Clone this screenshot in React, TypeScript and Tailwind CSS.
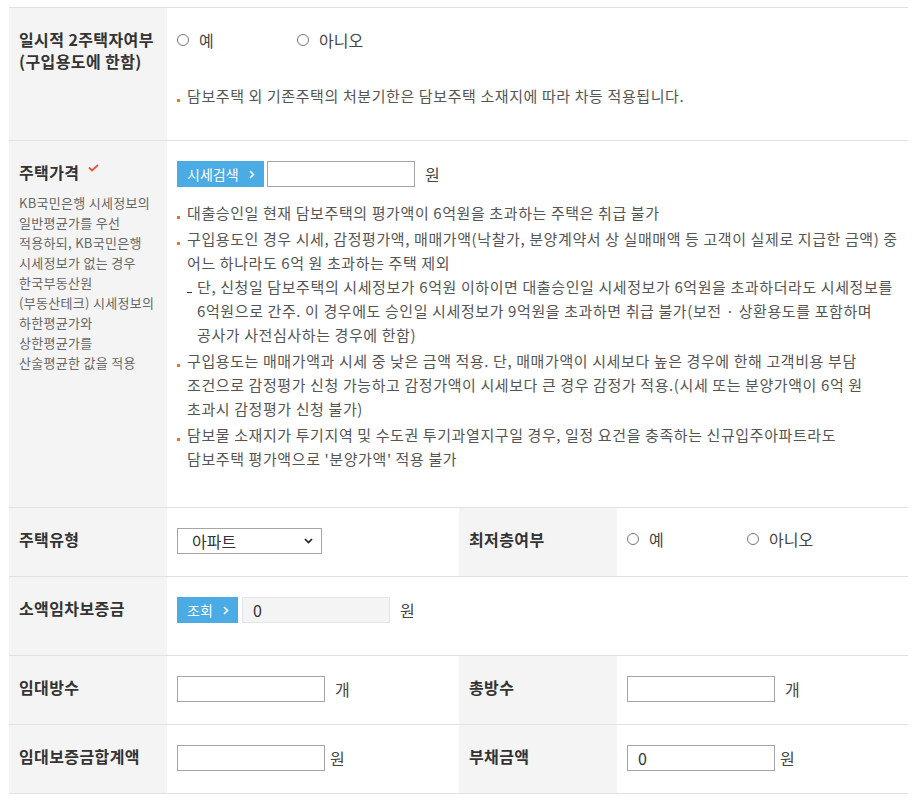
import React from 'react';

const Radio = ({ label }: { label: string }) => (
  <span className="flex items-center w-[120px]">
    <span className="w-[12px] h-[12px] rounded-full border border-[#777] bg-white" />
    <span className="ml-[10px] text-[16px] text-[#444]">{label}</span>
  </span>
);

const Bullet = ({ lines, first }: { lines: string[]; first?: boolean }) => (
  <li className={`relative pl-[10px] ${first ? '' : 'mt-[2px]'}`}>
    <span className="absolute left-0 top-[15px] w-[3px] h-[3px] bg-[#f26f21]" />
    {lines.map((l) => (
      <span key={l} className="block whitespace-nowrap">
        {l}
      </span>
    ))}
  </li>
);

const Dash = ({ lines }: { lines: string[] }) => (
  <li className="relative pl-[20px]">
    <span className="absolute left-[10px] top-[17px] w-[5px] h-px bg-[#333]" />
    {lines.map((l) => (
      <span key={l} className="block whitespace-nowrap">
        {l}
      </span>
    ))}
  </li>
);

const Label = ({ children, className = '' }: { children: React.ReactNode; className?: string }) => (
  <div className={`w-[158px] shrink-0 bg-[#f4f4f4] pl-[10px] pt-[20px] ${className}`}>
    <div className="text-[16px] leading-[22px] tracking-[0.4px] font-bold text-[#333] whitespace-nowrap">{children}</div>
  </div>
);

const BlueButton = ({ text, width }: { text: string; width: string }) => (
  <button className={`h-[26px] ${width} bg-[#4aabe5] text-white text-[14px] flex items-center pl-[10px] gap-[10px]`}>
    <span>{text}</span>
    <svg width="6" height="9" viewBox="0 0 6 9">
      <path d="M1 1l3.5 3.5L1 8" stroke="white" strokeWidth="1.6" fill="none" />
    </svg>
  </button>
);

const TextBox = ({ value = '', className = '' }: { value?: string; className?: string }) => (
  <input
    readOnly
    value={value}
    className={`h-[26px] w-[148px] border border-[#a5a5a5] bg-white px-[10px] text-[16px] text-[#333] outline-none ${className}`}
  />
);

const App = () => {
  return (
    <div className="bg-white min-h-[800px] pt-[7px] pl-[9px] font-['Noto_Sans_CJK_KR','Noto_Sans',sans-serif] text-[#555]">
      <div className="w-[899px] border-t border-[#e1e1e1]">
        {/* 일시적 2주택 */}
        <div className="flex border-b border-[#e1e1e1]">
          <Label>
            일시적 2주택자여부
            <br />
            (구입용도에 한함)
          </Label>
          <div className="flex-1 pl-[10px] pt-[19px] pb-[32px]">
            <div className="flex items-center h-[26px]">
              <Radio label="예" />
              <Radio label="아니오" />
            </div>
            <ul className="mt-[31px] text-[15px] tracking-[0.6px] leading-[24px]">
              <Bullet first lines={['담보주택 외 기존주택의 처분기한은 담보주택 소재지에 따라 차등 적용됩니다.']} />
            </ul>
          </div>
        </div>

        {/* 주택가격 */}
        <div className="flex border-b border-[#e1e1e1]">
          <div className="w-[158px] shrink-0 bg-[#f4f4f4] pl-[10px] pt-[20px]">
            <div className="flex items-center text-[16px] leading-[22px] tracking-[0.4px] font-bold text-[#333]">
              주택가격
              <svg className="ml-[9px] -mt-[9px]" width="11" height="8" viewBox="0 0 11 8">
                <path d="M1 3.5l3 3L10 1" stroke="#e8553f" strokeWidth="1.8" fill="none" />
              </svg>
            </div>
            <div className="mt-[10px] text-[13px] tracking-[0.3px] leading-[20px] text-[#666] whitespace-nowrap">
              <span className="block">KB국민은행 시세정보의</span>
              <span className="block">일반평균가를 우선</span>
              <span className="block">적용하되, KB국민은행</span>
              <span className="block">시세정보가 없는 경우</span>
              <span className="block">한국부동산원</span>
              <span className="block">(부동산테크) 시세정보의</span>
              <span className="block">하한평균가와</span>
              <span className="block">상한평균가를</span>
              <span className="block">산술평균한 값을 적용</span>
            </div>
          </div>
          <div className="flex-1 pl-[10px] pt-[20px] pb-[36px]">
            <div className="flex items-center">
              <BlueButton text="시세검색" width="w-[87px]" />
              <TextBox className="ml-[3px]" />
              <span className="ml-[10px] text-[16px] text-[#444]">원</span>
            </div>
            <ul className="mt-[14px] text-[15px] tracking-[0.6px] leading-[24px]">
              <Bullet first lines={['대출승인일 현재 담보주택의 평가액이 6억원을 초과하는 주택은 취급 불가']} />
              <Bullet
                lines={[
                  '구입용도인 경우 시세, 감정평가액, 매매가액(낙찰가, 분양계약서 상 실매매액 등 고객이 실제로 지급한 금액) 중',
                  '어느 하나라도 6억 원 초과하는 주택 제외',
                ]}
              />
              <Dash
                lines={[
                  '단, 신청일 담보주택의 시세정보가 6억원 이하이면 대출승인일 시세정보가 6억원을 초과하더라도 시세정보를',
                  '6억원으로 간주. 이 경우에도 승인일 시세정보가 9억원을 초과하면 취급 불가(보전 · 상환용도를 포함하며',
                  '공사가 사전심사하는 경우에 한함)',
                ]}
              />
              <Bullet
                lines={[
                  '구입용도는 매매가액과 시세 중 낮은 금액 적용. 단, 매매가액이 시세보다 높은 경우에 한해 고객비용 부담',
                  '조건으로 감정평가 신청 가능하고 감정가액이 시세보다 큰 경우 감정가 적용.(시세 또는 분양가액이 6억 원',
                  '초과시 감정평가 신청 불가)',
                ]}
              />
              <Bullet
                lines={[
                  '담보물 소재지가 투기지역 및 수도권 투기과열지구일 경우, 일정 요건을 충족하는 신규입주아파트라도',
                  "담보주택 평가액으로 '분양가액' 적용 불가",
                ]}
              />
            </ul>
          </div>
        </div>

        {/* 주택유형 / 최저층여부 */}
        <div className="flex border-b border-[#e1e1e1]">
          <Label>주택유형</Label>
          <div className="w-[292px] shrink-0 pl-[10px] pt-[20px] pb-[22px]">
            <div className="h-[26px] w-[145px] border border-[#a5a5a5] flex items-center justify-between pl-[14px] pr-[8px] text-[16px] text-[#333]">
              <span>아파트</span>
              <svg width="9" height="6" viewBox="0 0 9 6">
                <path d="M1 1l3.5 3.5L8 1" stroke="#222" strokeWidth="1.7" fill="none" />
              </svg>
            </div>
          </div>
          <Label>최저층여부</Label>
          <div className="flex-1 pl-[10px] pt-[18px]">
            <div className="flex items-center h-[26px]">
              <Radio label="예" />
              <Radio label="아니오" />
            </div>
          </div>
        </div>

        {/* 소액임차보증금 */}
        <div className="flex border-b border-[#e1e1e1]">
          <Label>소액임차보증금</Label>
          <div className="flex-1 pl-[10px] pt-[20px] pb-[32px]">
            <div className="flex items-center">
              <BlueButton text="조회" width="w-[61px]" />
              <input
                readOnly
                value="0"
                className="ml-[4px] h-[26px] w-[148px] border border-[#e4e4e4] bg-[#f4f4f4] px-[10px] text-[16px] text-[#333] outline-none"
              />
              <span className="ml-[10px] text-[16px] text-[#444]">원</span>
            </div>
          </div>
        </div>

        {/* 임대방수 / 총방수 */}
        <div className="flex border-b border-[#e1e1e1]">
          <Label>임대방수</Label>
          <div className="w-[292px] shrink-0 pl-[10px] pt-[20px] pb-[22px] flex items-start">
            <TextBox />
            <span className="ml-[10px] leading-[26px] text-[16px] text-[#444]">개</span>
          </div>
          <Label>총방수</Label>
          <div className="flex-1 pl-[10px] pt-[20px] flex items-start">
            <TextBox />
            <span className="ml-[10px] leading-[26px] text-[16px] text-[#444]">개</span>
          </div>
        </div>

        {/* 임대보증금합계액 / 부채금액 */}
        <div className="flex border-b border-[#e1e1e1]">
          <Label>임대보증금합계액</Label>
          <div className="w-[292px] shrink-0 pl-[10px] pt-[20px] pb-[22px] flex items-start">
            <TextBox />
            <span className="ml-[5px] leading-[26px] text-[16px] text-[#444]">원</span>
          </div>
          <Label>부채금액</Label>
          <div className="flex-1 pl-[10px] pt-[20px] flex items-start">
            <TextBox value="0" />
            <span className="ml-[5px] leading-[26px] text-[16px] text-[#444]">원</span>
          </div>
        </div>
      </div>
    </div>
  );
};

export default App;
